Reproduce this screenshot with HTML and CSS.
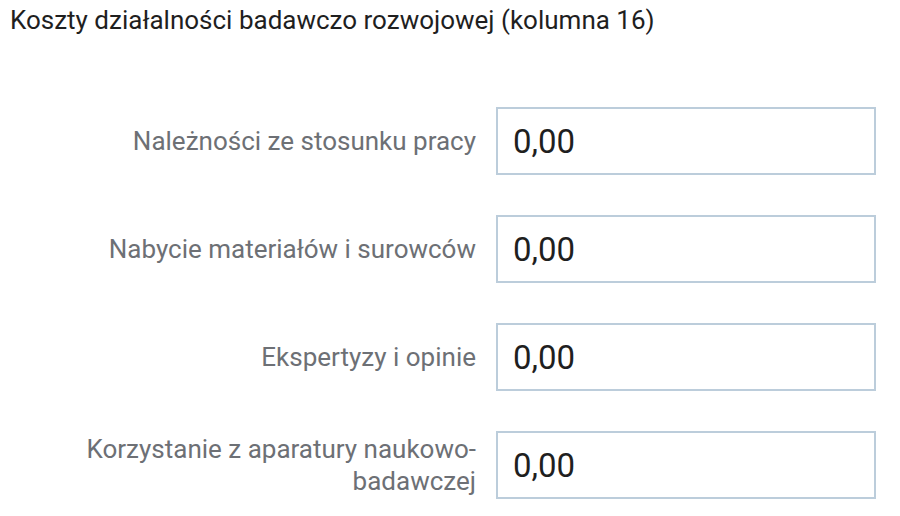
FILE: index.html
```html
<!DOCTYPE html>
<html lang="pl">
<head>
<meta charset="utf-8">
<link rel="stylesheet" href="styles.css">
</head>
<body>
<div class="page">
  <h1 class="title">Koszty działalności badawczo rozwojowej (kolumna 16)</h1>
  <div class="form">
    <label class="label">Należności ze stosunku pracy</label>
    <div class="field">0,00</div>
    <label class="label">Nabycie materiałów i surowców</label>
    <div class="field">0,00</div>
    <label class="label">Ekspertyzy i opinie</label>
    <div class="field">0,00</div>
    <label class="label">Korzystanie z aparatury naukowo-<br>badawczej</label>
    <div class="field">0,00</div>
  </div>
</div>
</body>
</html>
```
FILE: styles.css
```css
html, body {
  margin: 0;
  padding: 0;
  background: #ffffff;
}
.page {
  font-family: Roboto, "Liberation Sans", sans-serif;
  padding: 4px 0 0 10px;
  width: 866px;
}
.title {
  margin: 0;
  font-size: 26px;
  font-weight: 400;
  line-height: 32px;
  color: #1f1f1f;
}
.form {
  margin-top: 71px;
  display: grid;
  grid-template-columns: 1fr 380px;
  column-gap: 20px;
  row-gap: 40px;
  align-items: center;
}
.label {
  text-align: right;
  font-size: 26px;
  line-height: 32px;
  color: #6d7075;
}
.field {
  box-sizing: border-box;
  height: 68px;
  border: 2px solid #bccddb;
  padding: 0 0 0 15px;
  display: flex;
  align-items: center;
  font-size: 33px;
  color: #1f1f1f;
}
```
